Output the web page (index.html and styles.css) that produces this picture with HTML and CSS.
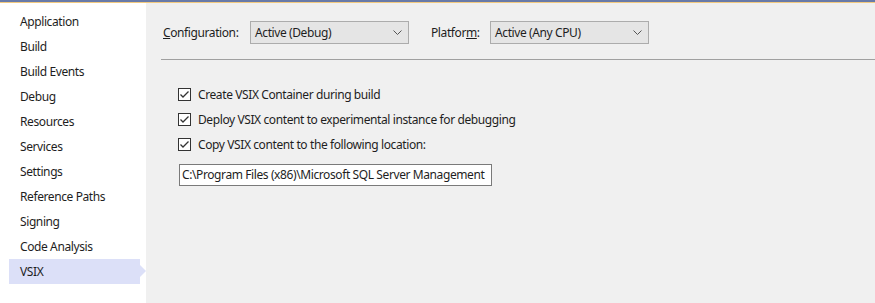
FILE: index.html
```html
<!DOCTYPE html>
<html lang="en">
<head>
    <meta charset="UTF-8">
    <title>VSIX Properties</title>
    <link rel="stylesheet" href="styles.css">
</head>
<body>
    <div class="top-strip"></div>
    <div class="designer">
        <ul class="tabs">
            <li>Application</li>
            <li>Build</li>
            <li>Build Events</li>
            <li>Debug</li>
            <li>Resources</li>
            <li>Services</li>
            <li>Settings</li>
            <li>Reference Paths</li>
            <li>Signing</li>
            <li>Code Analysis</li>
            <li class="selected">VSIX</li>
        </ul>

        <div class="page">
            <div class="config-bar">
                <label class="config-label"><u>C</u>onfiguration:</label>
                <div class="combo">
                    <span>Active (Debug)</span>
                    <svg class="chevron" width="9" height="5" viewBox="0 0 9 5"><path d="M0.5 0.5 L4.5 4.5 L8.5 0.5" fill="none" stroke="#555" stroke-width="1"/></svg>
                </div>
                <label class="config-label platform-label">Platfor<u>m</u>:</label>
                <div class="combo">
                    <span>Active (Any CPU)</span>
                    <svg class="chevron" width="9" height="5" viewBox="0 0 9 5"><path d="M0.5 0.5 L4.5 4.5 L8.5 0.5" fill="none" stroke="#555" stroke-width="1"/></svg>
                </div>
            </div>
            <div class="separator"></div>

            <div class="options">
                <div class="check-row">
                    <span class="checkbox"><svg width="11" height="11" viewBox="0 0 11 11"><path d="M1.5 5.5 L4 8 L9.5 2.5" fill="none" stroke="#333" stroke-width="1.3"/></svg></span>
                    <span>Create VSIX Container during build</span>
                </div>
                <div class="check-row">
                    <span class="checkbox"><svg width="11" height="11" viewBox="0 0 11 11"><path d="M1.5 5.5 L4 8 L9.5 2.5" fill="none" stroke="#333" stroke-width="1.3"/></svg></span>
                    <span>Deploy VSIX content to experimental instance for debugging</span>
                </div>
                <div class="check-row">
                    <span class="checkbox"><svg width="11" height="11" viewBox="0 0 11 11"><path d="M1.5 5.5 L4 8 L9.5 2.5" fill="none" stroke="#333" stroke-width="1.3"/></svg></span>
                    <span>Copy VSIX content to the following location:</span>
                </div>
                <div class="path-box">C:\Program Files (x86)\Microsoft SQL Server Management</div>
            </div>
        </div>
    </div>
</body>
</html>
```

FILE: styles.css
```css
body {
    margin: 0;
    font-family: "Noto Sans", "Open Sans", sans-serif;
    font-size: 12px;
    letter-spacing: -0.4px;
    color: #1e1e1e;
    background-color: #f0f0f0;
    height: 303px;
    overflow: hidden;
}
.top-strip {
    height: 2px;
    background-color: #687aa8;
    border-bottom: 1px solid #f2c97f;
}
.designer {
    display: flex;
    height: 300px;
}
.tabs {
    list-style: none;
    margin: 0;
    padding: 6px 0 0 0;
    width: 146px;
    flex-shrink: 0;
    background-color: #fff;
}
.tabs li {
    height: 25px;
    line-height: 25px;
    padding-left: 20px;
    position: relative;
    white-space: nowrap;
}
.tabs li.selected {
    margin-left: 9px;
    padding-left: 11px;
    width: 120px;
    background-color: #dce0f8;
}
.tabs li.selected::after {
    content: "";
    position: absolute;
    left: 131px;
    top: 6px;
    border-top: 6px solid transparent;
    border-bottom: 6px solid transparent;
    border-left: 6px solid #dce0f8;
}
.page {
    flex: 1;
    padding-left: 15px;
}
.config-bar {
    display: flex;
    align-items: center;
    height: 23px;
    margin-top: 18px;
    padding-left: 2px;
}
.config-label {
    width: 87px;
    flex-shrink: 0;
}
.platform-label {
    width: 59px;
    margin-left: 22px;
}
.combo {
    box-sizing: border-box;
    width: 159px;
    height: 23px;
    display: flex;
    align-items: center;
    justify-content: space-between;
    padding: 0 6px 0 4px;
    background-color: #e5e5e5;
    border: 1px solid #acacac;
}
.chevron {
    display: block;
}
.separator {
    height: 1px;
    background-color: #a0a0a0;
    margin-top: 15px;
}
.options {
    padding: 22px 0 0 17px;
}
.check-row {
    display: flex;
    align-items: center;
    height: 25px;
}
.checkbox {
    box-sizing: border-box;
    width: 13px;
    height: 13px;
    border: 1px solid #333;
    background-color: #fff;
    margin-right: 7px;
    display: flex;
    align-items: center;
    justify-content: center;
}
.checkbox svg {
    display: block;
}
.path-box {
    box-sizing: border-box;
    width: 313px;
    height: 22px;
    line-height: 20px;
    margin: 7px 0 0 1px;
    padding-left: 2px;
    background-color: #fff;
    border: 1px solid #7a7a7a;
    white-space: nowrap;
    overflow: hidden;
}
```
